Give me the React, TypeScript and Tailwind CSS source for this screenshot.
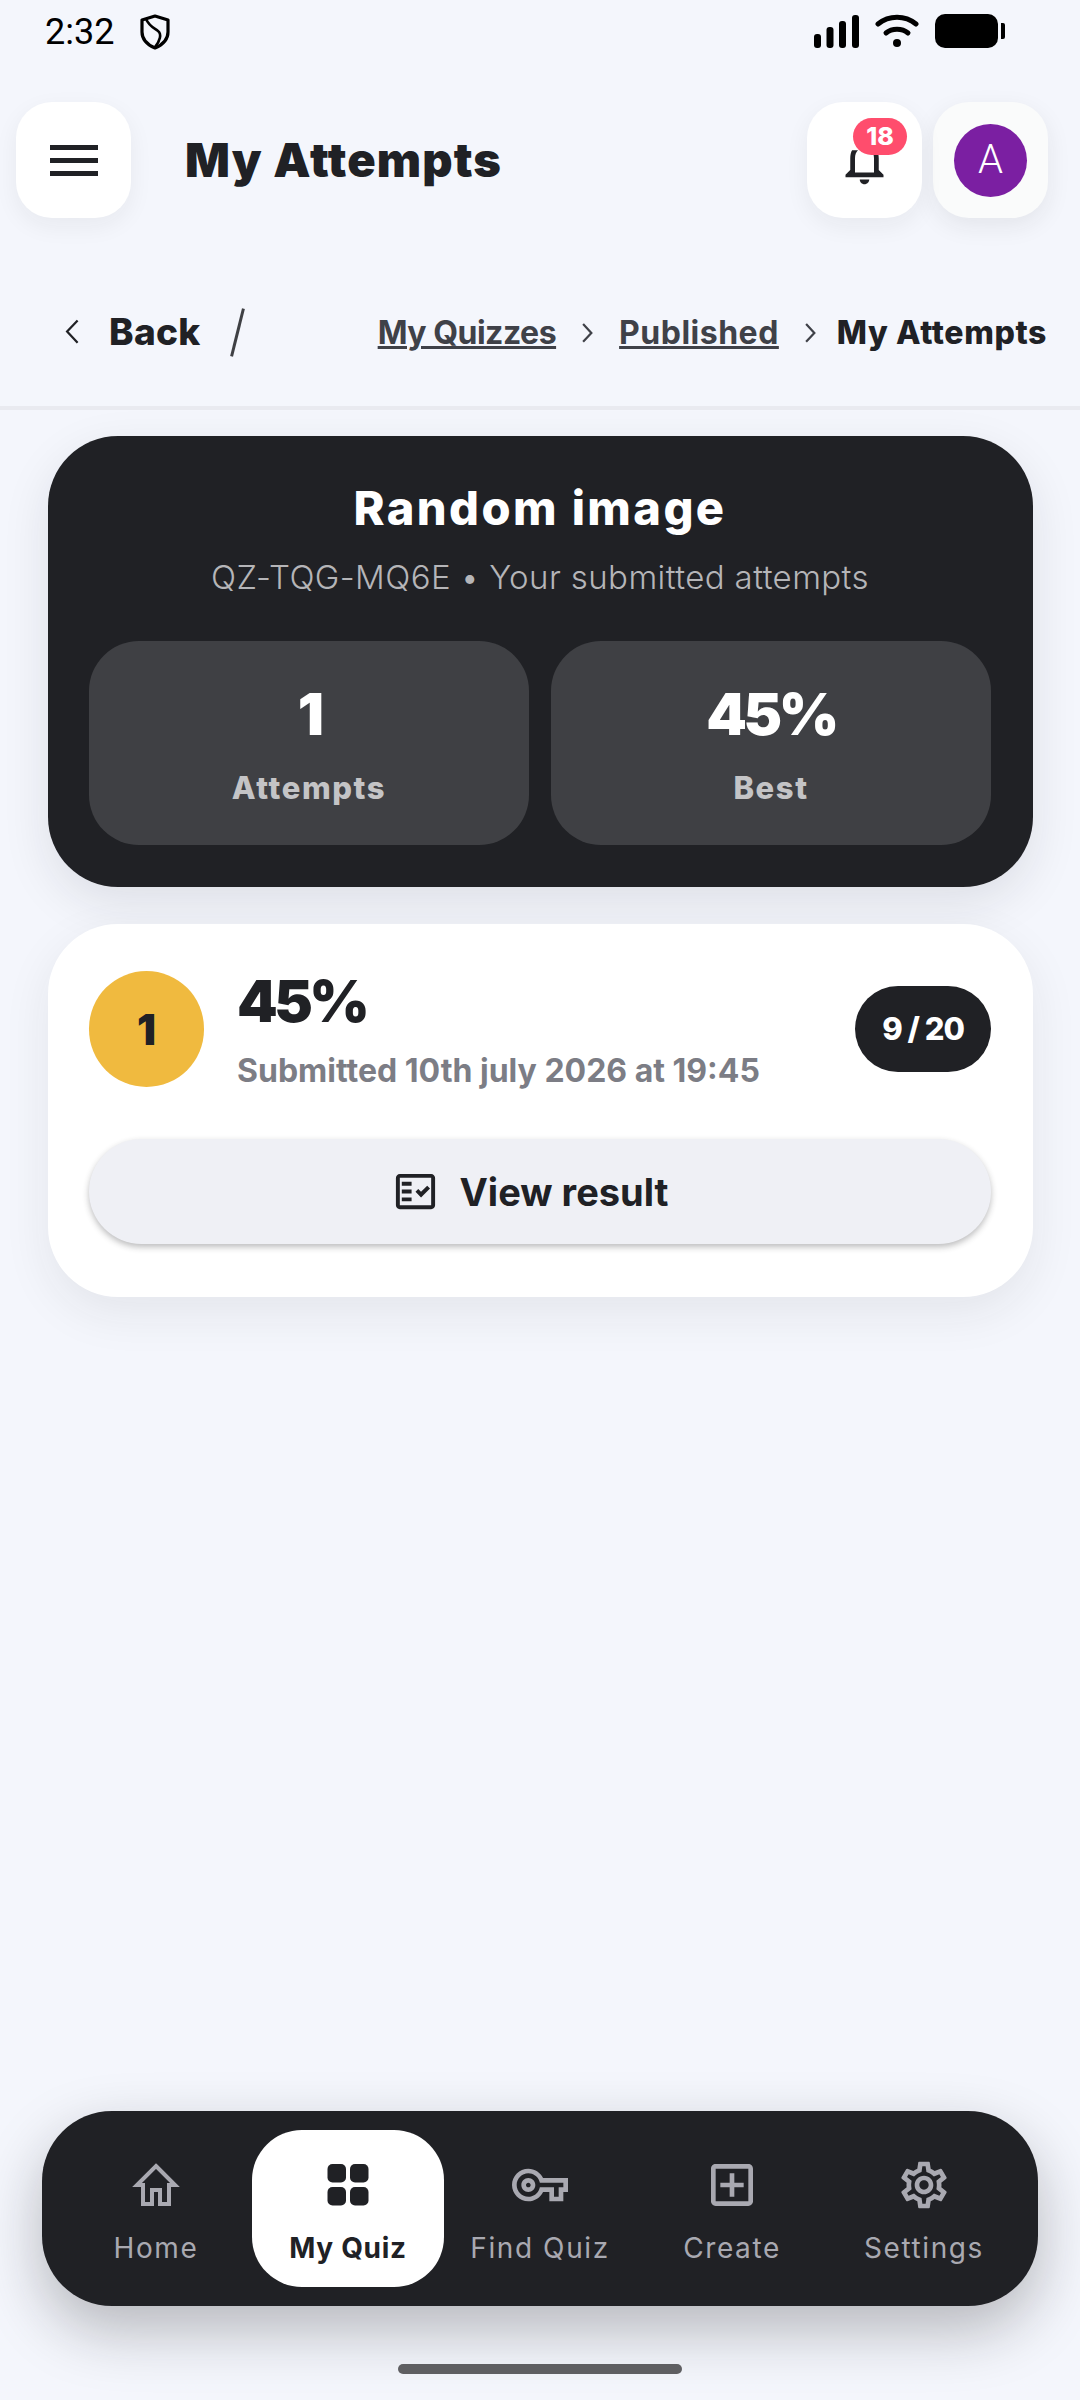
import React from "react";

const Bars = () => (
  <svg width="45" height="34" viewBox="0 0 45 34" fill="#000">
    <rect x="0" y="20" width="7" height="14" rx="3" />
    <rect x="12.500" y="13" width="7" height="21" rx="3" />
    <rect x="25" y="7" width="7" height="27" rx="3" />
    <rect x="38" y="1" width="7" height="33" rx="3" />
  </svg>
);

const Wifi = () => (
  <svg width="44" height="34" viewBox="0 0 44 34" fill="none" stroke="#000" strokeWidth="5" strokeLinecap="round">
    <path d="M3 10C14 1 30 1 41 10" />
    <path d="M11 19C17 14 27 14 33 19" />
    <circle cx="22" cy="29" r="4" fill="#000" stroke="none" />
  </svg>
);

const Shield = () => (
  <svg width="30" height="36" viewBox="0 0 30 36" fill="none" stroke="#000" strokeWidth="3.2" strokeLinejoin="round">
    <path d="M15 2 28 6V18C28 26 22 31 15 34 8 31 2 26 2 18V6Z" />
    <path d="M6 5C9 12 14 14 18 17 22 20 20 27 15 33" strokeWidth="2.6" />
  </svg>
);

const Chevron = ({ left, size, color, width }: { left?: boolean; size: number; color: string; width: number }) => (
  <svg width={size} height={size * 1.8} viewBox="0 0 10 18" fill="none" stroke={color} strokeWidth={width}>
    <path d={left ? "M9 1 1.5 9 9 17" : "M1 1 8.5 9 1 17"} />
  </svg>
);

const grey = "#a9a9b1";

const navIcons: Record<string, React.ReactNode> = {
  Home: (
    <svg width="56" height="56" viewBox="0 0 56 56" fill="none" stroke={grey} strokeWidth="4">
      <path d="M28 9 47 28H41V47H32V33H24V47H15V28H9Z" />
    </svg>
  ),
  "My Quiz": (
    <svg width="56" height="56" viewBox="0 0 56 56" fill="#202125">
      <rect x="7.500" y="7" width="18.500" height="18.500" rx="5" />
      <rect x="30" y="7" width="18.500" height="18.500" rx="5" />
      <rect x="7.500" y="30" width="18.500" height="18.500" rx="5" />
      <rect x="30" y="30" width="18.500" height="18.500" rx="5" />
    </svg>
  ),
  "Find Quiz": (
    <svg width="56" height="56" viewBox="0 0 24 24" fill={grey}>
      <path d="M22 19h-6v-4h-2.68c-1.14 2.42-3.6 4-6.32 4-3.86 0-7-3.14-7-7s3.14-7 7-7c2.72 0 5.17 1.58 6.32 4H24v6h-2v4zm-4-2h2v-4h2v-2H11.94l-.23-.67C11.01 8.34 9.11 7 7 7c-2.76 0-5 2.24-5 5s2.24 5 5 5c2.11 0 4.01-1.34 4.71-3.33l.23-.67H18v4zM7 15c-1.65 0-3-1.35-3-3s1.35-3 3-3 3 1.35 3 3-1.35 3-3 3zm0-4c-.55 0-1 .45-1 1s.45 1 1 1 1-.45 1-1-.45-1-1-1z" />
    </svg>
  ),
  Create: (
    <svg width="56" height="56" viewBox="0 0 24 24" fill={grey}>
      <path d="M19 3H5c-1.11 0-2 .9-2 2v14c0 1.1.89 2 2 2h14c1.1 0 2-.9 2-2V5c0-1.1-.9-2-2-2zm0 16H5V5h14v14zm-8-2h2v-4h4v-2h-4V7h-2v4H7v2h4z" />
    </svg>
  ),
  Settings: (
    <svg width="56" height="56" viewBox="0 0 24 24" fill={grey}>
      <path d="M19.43 12.98c.04-.32.07-.64.07-.98 0-.34-.03-.66-.07-.98l2.11-1.65c.19-.15.24-.42.12-.64l-2-3.46c-.09-.16-.26-.25-.44-.25-.06 0-.12.01-.17.03l-2.49 1c-.52-.4-1.08-.73-1.69-.98l-.38-2.65C14.46 2.18 14.25 2 14 2h-4c-.25 0-.46.18-.49.42l-.38 2.65c-.61.25-1.17.59-1.69.98l-2.49-1c-.06-.02-.12-.03-.18-.03-.17 0-.34.09-.43.25l-2 3.46c-.13.22-.07.49.12.64l2.11 1.65c-.04.32-.07.65-.07.98 0 .33.03.66.07.98l-2.11 1.65c-.19.15-.24.42-.12.64l2 3.46c.09.16.26.25.44.25.06 0 .12-.01.17-.03l2.49-1c.52.4 1.08.73 1.69.98l.38 2.65c.03.24.24.42.49.42h4c.25 0 .46-.18.49-.42l.38-2.65c.61-.25 1.17-.59 1.69-.98l2.49 1c.06.02.12.03.18.03.17 0 .34-.09.43-.25l2-3.46c.12-.22.07-.49-.12-.64l-2.11-1.65zm-1.98-1.71c.04.31.05.52.05.73 0 .21-.02.43-.05.73l-.14 1.13.89.7 1.08.84-.7 1.21-1.27-.51-1.04-.42-.9.68c-.43.32-.84.56-1.25.73l-1.06.43-.16 1.13-.2 1.35h-1.4l-.19-1.35-.16-1.13-1.06-.43c-.43-.18-.83-.41-1.23-.71l-.91-.7-1.06.43-1.27.51-.7-1.21 1.08-.84.89-.7-.14-1.13c-.03-.31-.05-.54-.05-.74s.02-.43.05-.73l.14-1.13-.89-.7-1.08-.84.7-1.21 1.27.51 1.04.42.9-.68c.43-.32.84-.56 1.25-.73l1.06-.43.16-1.13.2-1.35h1.39l.19 1.35.16 1.13 1.06.43c.43.18.83.41 1.23.71l.91.7 1.06-.43 1.27-.51.7 1.21-1.07.85-.89.7.14 1.13zM12 8c-2.21 0-4 1.79-4 4s1.79 4 4 4 4-1.79 4-4-1.79-4-4-4zm0 6c-1.1 0-2-.9-2-2s.9-2 2-2 2 .9 2 2-.9 2-2 2z" />
    </svg>
  ),
};

const NavItem = ({ label, active }: { label: string; active?: boolean }) => (
  <div className={`flex w-[192px] flex-col items-center rounded-[50px] pt-[27px] ${active ? "bg-white" : ""}`}>
    {navIcons[label]}
    <span
      className={
        active
          ? "mt-[15px] text-[28px] leading-[40px] font-bold tracking-[0.7px] text-[#202125]"
          : "mt-[15px] text-[28px] leading-[40px] font-normal tracking-[1.6px] text-[#a9a9b1]"
      }
    >
      {label}
    </span>
  </div>
);

const Stat = ({ value, label }: { value: string; label: string }) => (
  <div className="flex h-[204px] flex-1 flex-col items-center rounded-[50px] bg-[#3f4044] pt-[38px]">
    <span className="text-[58px] leading-[70px] font-black tracking-[-3.5px] text-white">{value}</span>
    <span className="mt-[19px] text-[31px] leading-[40px] font-extrabold tracking-[1.6px] text-[#c4c4c6]">{label}</span>
  </div>
);

export default function App() {
  return (
    <div className="flex h-[2400px] w-[1080px] flex-col overflow-hidden bg-[#f4f6fc] [font-family:Inter,sans-serif] text-[#202125]">
      <div className="flex h-[102px] items-start justify-between pt-[14px] pr-[75px] pl-[45px]">
        <div className="flex items-center">
          <span className="text-[36px] leading-[34px] font-normal text-black [font-family:Roboto,sans-serif]">2:32</span>
          <span className="ml-[26px] flex"><Shield /></span>
        </div>
        <div className="flex items-center">
          <Bars />
          <span className="ml-[16px] flex"><Wifi /></span>
          <div className="ml-[16px] h-[34px] w-[63px] rounded-[10px] bg-black" />
          <div className="ml-[3px] h-[16px] w-[4px] rounded-r-[2px] bg-black" />
        </div>
      </div>

      <div className="flex h-[116px] items-center pr-[32px] pl-[16px]">
        <div className="flex h-[116px] w-[115px] flex-col items-center justify-center gap-[8px] rounded-[36px] bg-white shadow-[0_8px_24px_rgba(32,33,37,0.06)]">
          <div className="h-[5px] w-[48px] bg-[#202125]" />
          <div className="h-[5px] w-[48px] bg-[#202125]" />
          <div className="h-[5px] w-[48px] bg-[#202125]" />
        </div>
        <h1 className="ml-[54px] flex-1 text-[47px] leading-[60px] font-black tracking-[1.1px]">My Attempts</h1>
        <div className="relative flex h-[116px] w-[115px] items-center justify-center rounded-[36px] bg-white shadow-[0_8px_24px_rgba(32,33,37,0.06)]">
          <svg className="[clip-path:inset(33%_0_0_0)]" width="57" height="57" viewBox="0 0 24 24" fill="#202125">
            <path d="M12 22c1.1 0 2-.9 2-2h-4c0 1.1.89 2 2 2zm6-6v-5c0-3.07-1.64-5.64-4.5-6.32V4c0-.83-.67-1.5-1.500-1.500s-1.500.67-1.500 1.500v.68C7.630 5.360 6 7.920 6 11v5l-2 2v1h16v-1l-2-2zm-2 1H8v-6c0-2.480 1.510-4.500 4-4.500s4 2.020 4 4.500v6z" />
          </svg>
          <span className="absolute top-[16px] left-[46px] flex h-[37px] w-[54px] items-center justify-center rounded-full bg-[#ff4d6d] text-[25px] leading-none font-extrabold text-white">
            18
          </span>
        </div>
        <div className="ml-[11px] flex h-[116px] w-[115px] items-center justify-center rounded-[36px] bg-[#fafbfb] shadow-[0_8px_24px_rgba(32,33,37,0.08)]">
          <div className="flex h-[73px] w-[73px] items-center justify-center rounded-full bg-[#7b1fa2] text-[40px] font-light text-white [font-family:Roboto,sans-serif]">
            A
          </div>
        </div>
      </div>

      <div className="flex h-[192px] items-center border-b-[4px] border-[#e9eaf0] pt-[40px] pr-[33px] pl-[65px]">
        <Chevron left size={14} color="#202125" width={1.6} />
        <span className="ml-[30px] text-[37px] leading-[44px] font-extrabold tracking-[0.3px]">Back</span>
        <div className="ml-[35px] h-[49px] w-[3px] rotate-[14deg] bg-[#3f4044]" />
        <div className="mt-[2px] flex flex-1 items-center justify-end">
          <span className="text-[32px] leading-[40px] font-bold tracking-[-0.5px] text-[#3f4148] underline decoration-[3px] underline-offset-[2px]">My Quizzes</span>
          <span className="mx-[26px] flex"><Chevron size={11} color="#3f4148" width={2} /></span>
          <span className="text-[32px] leading-[40px] font-bold tracking-[0.5px] text-[#3f4148] underline decoration-[3px] underline-offset-[2px]">Published</span>
          <span className="mr-[21px] ml-[26px] flex"><Chevron size={11} color="#3f4148" width={2} /></span>
          <span className="text-[32px] leading-[40px] font-extrabold tracking-[0.6px]">My Attempts</span>
        </div>
      </div>

      <main className="flex flex-1 flex-col gap-[37px] pt-[26px] pr-[47px] pl-[48px]">
        <section className="rounded-[70px] bg-[#202125] pt-[42px] pr-[42px] pb-[42px] pl-[41px] shadow-[0_16px_48px_rgba(32,33,37,0.1)]">
          <h2 className="text-center text-[47px] leading-[60px] font-extrabold tracking-[2.4px] text-white">Random image</h2>
          <p className="mt-[17px] text-center text-[33px] leading-[44px] font-light tracking-[0.4px] text-[#b5b5b8]">
            QZ-TQG-MQ6E • Your submitted attempts
          </p>
          <div className="mt-[42px] flex gap-[22px]">
            <Stat value="1" label="Attempts" />
            <Stat value="45%" label="Best" />
          </div>
        </section>

        <section className="rounded-[70px] bg-white pt-[47px] pr-[42px] pb-[53px] pl-[41px] shadow-[0_16px_48px_rgba(32,33,37,0.08)]">
          <div className="flex h-[116px] items-start">
            <div className="flex h-[116px] w-[115px] items-center justify-center rounded-full bg-[#f0ba3f] text-[42px] font-black">
              1
            </div>
            <div className="ml-[33px] flex flex-1 flex-col">
              <span className="text-[58px] leading-[60px] font-black tracking-[-3.5px]">45%</span>
              <span className="mt-[20px] text-[32px] leading-[40px] font-bold text-[#7c7d85]">
                Submitted 10th july 2026 at 19:45
              </span>
            </div>
            <div className="mt-[15px] flex h-[86px] w-[136px] items-center justify-center rounded-full bg-[#202125] text-[31px] font-extrabold tracking-[-1px] text-white">
              9 / 20
            </div>
          </div>
          <button className="mt-[52px] flex h-[105px] w-full items-center justify-center rounded-full bg-[#eff0f5] pr-[20px] shadow-[0_3px_6px_rgba(32,33,37,0.3)]">
            <svg width="47" height="47" viewBox="0 0 24 24" fill="#202125">
              <path d="M20 3H4c-1.100 0-2 .9-2 2v14c0 1.100.9 2 2 2h16c1.100 0 2-.9 2-2V5c0-1.100-.9-2-2-2zm0 16H4V5h16v14z" />
              <path d="M19.410 10.420 17.990 9l-3.170 3.170-1.410-1.420L12 12.160 14.830 15zM5 7h5v2H5zM5 11h5v2H5zM5 15h5v2H5z" />
            </svg>
            <span className="ml-[21px] text-[38px] leading-[44px] font-bold">View result</span>
          </button>
        </section>
      </main>

      <nav className="mx-[42px] flex h-[195px] justify-between rounded-[70px] bg-[#202125] px-[18px] py-[19px] shadow-[0_24px_60px_rgba(20,20,25,0.28)]">
        <NavItem label="Home" />
        <NavItem label="My Quiz" active />
        <NavItem label="Find Quiz" />
        <NavItem label="Create" />
        <NavItem label="Settings" />
      </nav>

      <div className="flex h-[94px] justify-center pt-[58px]">
        <div className="h-[10px] w-[284px] rounded-full bg-[#5f5f62]" />
      </div>
    </div>
  );
}
